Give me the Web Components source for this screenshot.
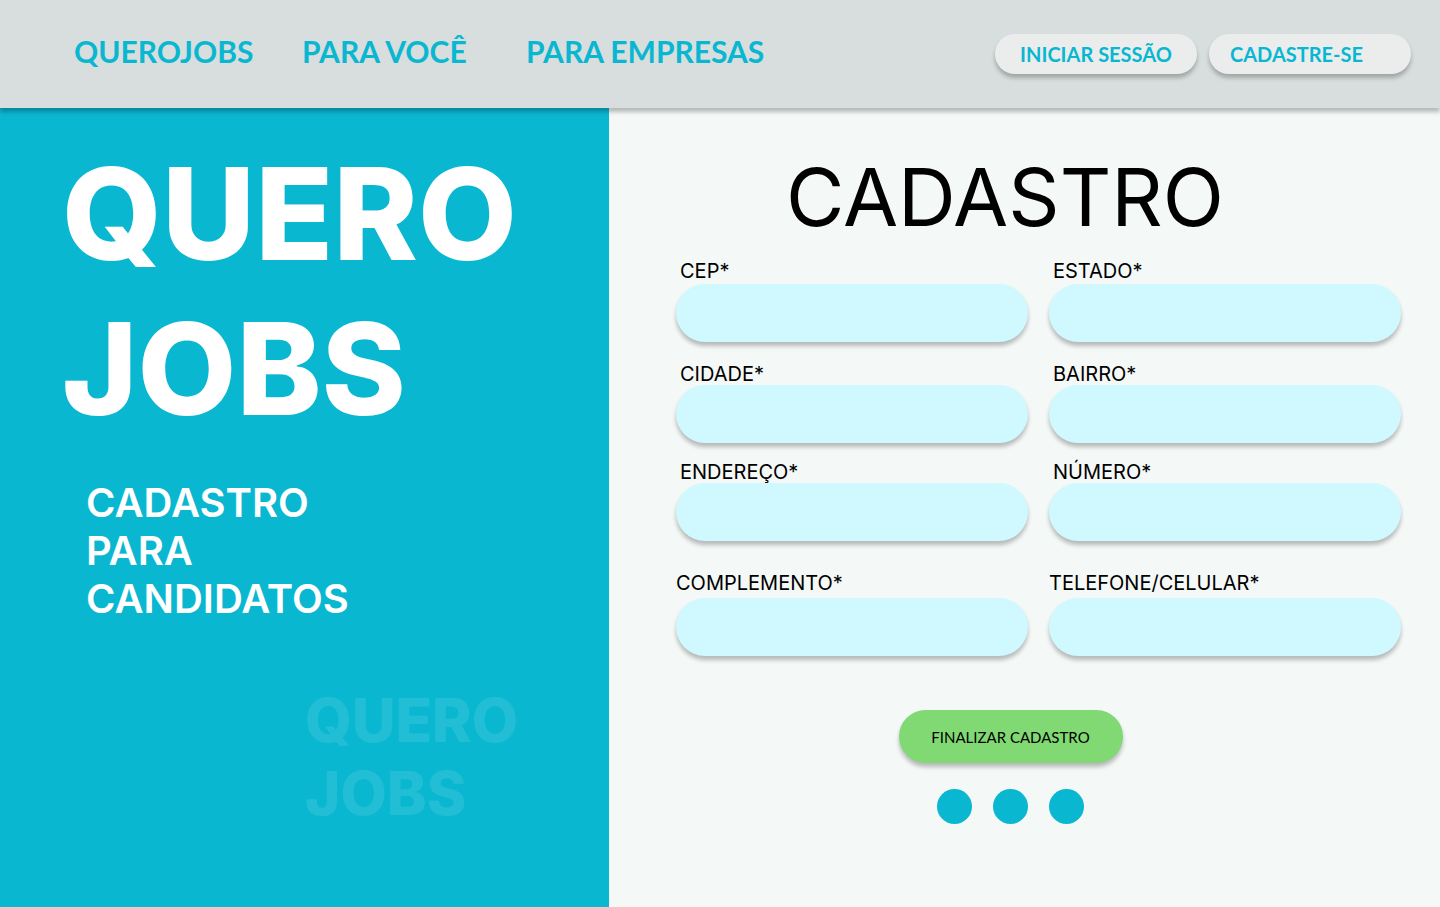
<!DOCTYPE html>
<html lang="pt-BR">
<head>
<meta charset="utf-8">
<meta name="viewport" content="width=device-width, initial-scale=1">
<title>QueroJobs - Cadastro</title>
<style>
  :root {
    --cyan: #0ab7d1;
    --shadow: 0 4px 4px rgba(0, 0, 0, .25);
    --brand-font: Lato, "Open Sans", sans-serif;
  }
  body {
    margin: 0;
    background: #f4f8f7;
    color: #000;
    font-family: Inter, "Liberation Sans", sans-serif;
  }
</style>
</head>
<body>
<quero-page></quero-page>

<script>
const define = (name, html, setup) => {
  const template = document.createElement('template');
  template.innerHTML = html;
  customElements.define(name, class extends HTMLElement {
    constructor() {
      super();
      this.attachShadow({ mode: 'open' }).append(template.content.cloneNode(true));
    }
    connectedCallback() {
      if (setup) setup(this, this.shadowRoot);
    }
  });
};

define('quero-pill', `
  <style>
    :host { display: block; }
    button {
      display: block; width: 100%; height: 40px; padding: 0 21px; border: 0; border-radius: 20px;
      background: #ebeded; color: var(--cyan); box-shadow: var(--shadow);
      font: 700 20px/40px var(--brand-font); text-align: var(--pill-align, center); white-space: nowrap;
      cursor: pointer;
    }
  </style>
  <button type="button"><slot></slot></button>`);

define('quero-header', `
  <style>
    :host {
      display: flex; justify-content: space-between; align-items: center; box-sizing: border-box;
      min-height: 108px; padding: 0 29px 0 74px; background: #d8dede; box-shadow: var(--shadow);
      position: relative; z-index: 1;
    }
    nav { display: grid; grid-template-columns: 228px 224px auto; padding-bottom: 6px; }
    a { color: var(--cyan); font: 700 30px/36px var(--brand-font); text-decoration: none; white-space: nowrap; }
    .account { display: grid; grid-template-columns: 202px 202px; gap: 12px; }
    .signup { --pill-align: left; }
  </style>
  <nav aria-label="Principal">
    <a href="#inicio">QUEROJOBS</a>
    <a href="#voce">PARA VOCÊ</a>
    <a href="#empresas">PARA EMPRESAS</a>
  </nav>
  <div class="account">
    <quero-pill>INICIAR SESSÃO</quero-pill>
    <quero-pill class="signup">CADASTRE-SE</quero-pill>
  </div>`);

define('quero-hero', `
  <style>
    :host { display: block; box-sizing: border-box; padding: 28px 60px 76px 62px; background: var(--cyan); color: #fff; }
    h1, p { margin: 0; }
    h1 { font-size: 128px; line-height: 155px; font-weight: 800; }
    .lead { margin-top: 33px; padding-left: 24px; font-size: 40px; line-height: 48px; font-weight: 600; }
    .ghost {
      width: 244px; margin: 61px 0 0 auto; color: rgba(255, 255, 255, .1);
      font-size: 60px; line-height: 73px; font-weight: 800;
    }
  </style>
  <h1>QUERO<br>JOBS</h1>
  <p class="lead">CADASTRO<br>PARA<br>CANDIDATOS</p>
  <p class="ghost" aria-hidden="true">QUERO<br>JOBS</p>`);

define('quero-field', `
  <style>
    :host { display: flex; flex-direction: column; gap: var(--label-gap, 0); min-width: 0; }
    label { padding-left: var(--label-inset, 4px); font-size: 20px; line-height: 22px; white-space: nowrap; }
    input {
      box-sizing: border-box; width: 100%; height: 58px; padding: 0 24px; border: 0; border-radius: 29px;
      background: #cff9ff; color: #000; font: 20px/24px Inter, sans-serif; box-shadow: var(--shadow);
    }
  </style>
  <label for="field"></label>
  <input id="field" type="text" required>`,
  (host, root) => {
    root.querySelector('label').textContent = host.getAttribute('label');
    root.querySelector('input').type = host.getAttribute('type') || 'text';
  });

define('quero-steps', `
  <style>
    :host { display: flex; gap: 21px; }
    span { width: 35px; height: 35px; border-radius: 50%; background: var(--cyan); }
  </style>
  <span></span><span></span><span></span>`);

define('quero-form', `
  <style>
    :host { display: block; padding: 40px 39px 40px 67px; }
    h2 {
      margin: 0 0 15px -67px; font-size: 80px; line-height: 97px; font-weight: 400; text-align: center;
    }
    .row { display: grid; grid-template-columns: 1fr 1fr; gap: 21px; }
    .first { --label-gap: 2px; }
    .near { margin-top: 21px; }
    .close { margin-top: 18px; }
    .apart { margin-top: 31px; --label-gap: 4px; --label-inset: 0; }
    .actions {
      display: flex; flex-direction: column; align-items: center; gap: 26px;
      margin: 54px 0 0 -56px;
    }
    .submit {
      width: 224px; height: 53px; padding: 0; border: 0; border-radius: 27px;
      background: #80d973; color: #000; box-shadow: var(--shadow);
      font: 400 15px/20px var(--brand-font); cursor: pointer;
    }
  </style>
  <form>
    <h2>CADASTRO</h2>
    <div class="row first">
      <quero-field label="CEP*"></quero-field>
      <quero-field label="ESTADO*"></quero-field>
    </div>
    <div class="row near">
      <quero-field label="CIDADE*"></quero-field>
      <quero-field label="BAIRRO*"></quero-field>
    </div>
    <div class="row close">
      <quero-field label="ENDEREÇO*"></quero-field>
      <quero-field label="NÚMERO*"></quero-field>
    </div>
    <div class="row apart">
      <quero-field label="COMPLEMENTO*"></quero-field>
      <quero-field label="TELEFONE/CELULAR*" type="tel"></quero-field>
    </div>
    <div class="actions">
      <button class="submit" type="submit">FINALIZAR CADASTRO</button>
      <quero-steps></quero-steps>
    </div>
  </form>`);

define('quero-page', `
  <style>
    :host { display: flex; flex-direction: column; min-height: 100vh; }
    main { flex: 1; display: grid; grid-template-columns: 609fr 831fr; }
  </style>
  <quero-header role="banner"></quero-header>
  <main>
    <quero-hero></quero-hero>
    <quero-form></quero-form>
  </main>`);
</script>
</body>
</html>
